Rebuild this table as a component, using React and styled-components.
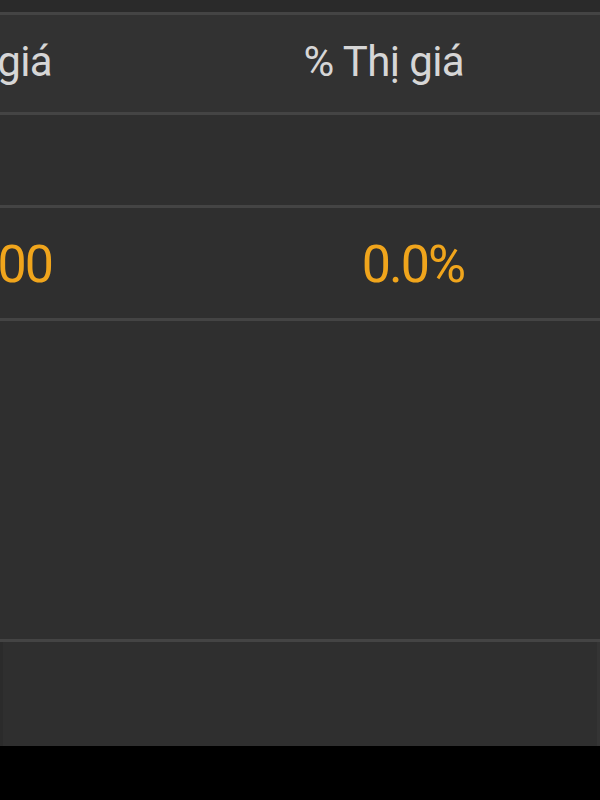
import React from "react";
import styled, { createGlobalStyle } from "styled-components";

const Global = createGlobalStyle`
  html, body { margin: 0; padding: 0; background: #000; }
  body { font-family: Roboto, "Noto Sans", "Liberation Sans", sans-serif; }
`;

const Panel = styled.div`
  width: 600px;
  height: 746px;
  overflow: hidden;
  background: #2f2f2f;
  display: flex;
  flex-direction: column;
  box-shadow: inset -3px 0 0 #343434, inset 3px 0 0 #2b2b2b;
`;

const TopBand = styled.div`
  height: 12px;
  flex: none;
  background: #2a2a2a;
  border-bottom: 3px solid #444444;
`;

const Row = styled.div`
  display: grid;
  grid-template-columns: 52px 412px 1fr;
  height: ${(p) => p.$h}px;
  flex: none;
  background: ${(p) => (p.$header ? "#323232" : "#2f2f2f")};
  border-bottom: 3px solid #444444;
  box-sizing: border-box;
`;

const Cell = styled.div`
  display: flex;
  align-items: center;
  justify-content: flex-end;
  overflow: hidden;
  white-space: nowrap;
  min-width: 0;
`;

const HeadText = styled.span`
  font-size: 42px;
  color: #d6d6d6;
  letter-spacing: -0.6px;
  transform: translateY(-2px);
`;

const Value = styled.span`
  font-size: 52px;
  color: #f0a51c;
  letter-spacing: -2px;
  transform: translateY(1px);
`;

const Filler = styled.div`
  flex: 1;
`;

export default function App() {
  return (
    <>
      <Global />
      <Panel>
        <TopBand />
        <Row $h={100} $header>
          <Cell>
            <HeadText>Thị giá</HeadText>
          </Cell>
          <Cell>
            <HeadText>% Thị giá</HeadText>
          </Cell>
          <Cell />
        </Row>
        <Row $h={93}>
          <Cell />
          <Cell />
          <Cell />
        </Row>
        <Row $h={113}>
          <Cell>
            <Value>10,000</Value>
          </Cell>
          <Cell>
            <Value>0.0%</Value>
          </Cell>
          <Cell />
        </Row>
        <Row $h={321}>
          <Cell />
          <Cell />
          <Cell />
        </Row>
        <Filler />
      </Panel>
    </>
  );
}
